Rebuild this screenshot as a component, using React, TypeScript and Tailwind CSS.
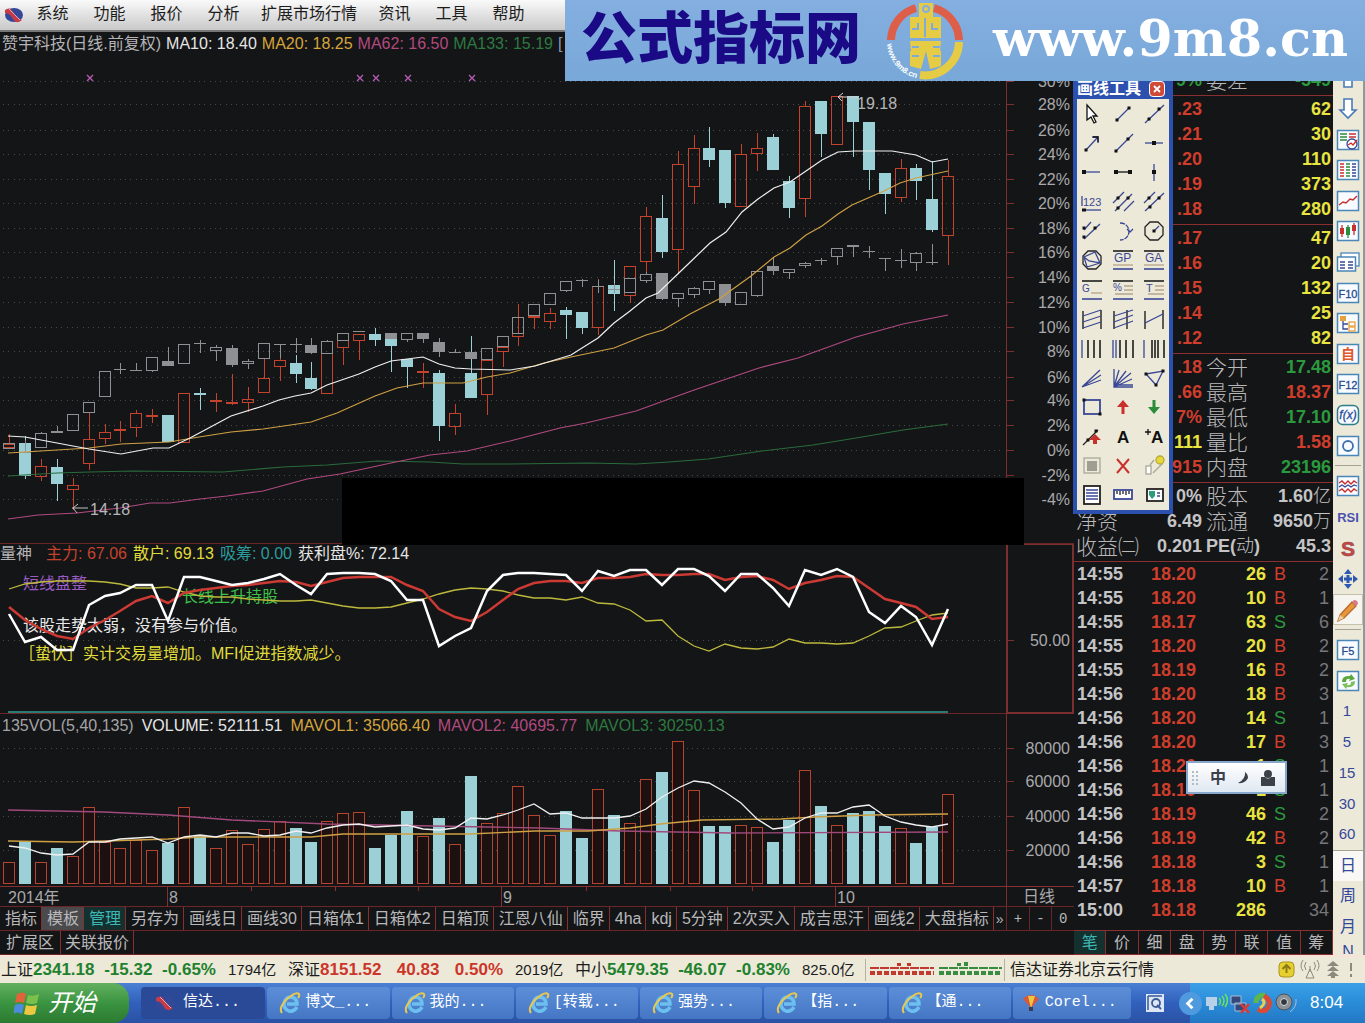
import { type ReactNode } from 'react'
import clsx from 'clsx'

type Kind = 'up' | 'down' | 'flat'
// high, body top, body bottom, low
type Candle = [Kind, number, number, number, number]

const STEP = 15.92
const barX = (i: number) => Math.round(9 + i * STEP)

const PRICE: Candle[] = [
  ['up', 434, 444, 448, 449], ['down', 436, 443, 476, 479], ['up', 459, 466, 477, 481], ['down', 459, 467, 484, 501],
  ['up', 478, 485, 490, 510], ['up', 413, 439, 464, 470], ['up', 424, 432, 439, 444], ['up', 421, 429, 430, 442],
  ['up', 410, 413, 428, 437], ['up', 409, 415, 416, 423], ['down', 415, 415, 442, 442], ['up', 393, 393, 443, 443],
  ['down', 388, 393, 394, 410], ['up', 393, 400, 401, 412], ['up', 374, 402, 403, 405], ['up', 387, 399, 403, 412],
  ['up', 359, 378, 393, 393], ['up', 350, 360, 367, 381], ['down', 355, 363, 374, 383], ['down', 362, 378, 389, 390],
  ['up', 353, 353, 394, 394], ['up', 340, 340, 348, 365], ['up', 334, 334, 341, 360], ['down', 328, 334, 340, 346],
  ['down', 339, 339, 346, 372], ['down', 359, 359, 367, 388], ['up', 363, 371, 372, 388], ['down', 370, 373, 426, 441],
  ['up', 404, 413, 427, 435], ['down', 336, 373, 398, 398], ['up', 360, 360, 395, 415], ['up', 347, 347, 352, 367],
  ['up', 304, 333, 337, 346], ['up', 316, 316, 318, 329], ['up', 308, 313, 322, 329], ['down', 307, 310, 315, 339],
  ['down', 312, 312, 328, 334], ['up', 279, 286, 328, 335], ['down', 260, 285, 294, 311], ['up', 266, 266, 296, 303],
  ['up', 207, 216, 262, 272], ['down', 195, 218, 252, 258], ['up', 151, 164, 250, 273], ['up', 135, 148, 187, 204],
  ['down', 127, 148, 160, 167], ['down', 150, 150, 203, 208], ['up', 144, 154, 207, 207], ['up', 133, 148, 154, 171],
  ['down', 134, 137, 170, 170], ['down', 176, 181, 208, 218], ['up', 101, 106, 199, 217], ['down', 101, 101, 134, 157],
  ['up', 96, 96, 145, 145], ['down', 96, 96, 122, 157], ['down', 122, 122, 170, 190], ['down', 173, 173, 194, 214],
  ['up', 159, 168, 198, 202], ['down', 164, 168, 181, 200], ['down', 161, 199, 230, 232], ['up', 160, 176, 236, 265],
]

const INDEX: (Candle | null)[] = [
  ['up', 443, 443, 449, 449], ['flat', 440, 452, 453, 453], ['up', 432, 433, 448, 448], ['up', 426, 431, 433, 433],
  ['up', 414, 414, 431, 431], ['up', 402, 402, 413, 413], ['up', 371, 371, 397, 397], ['flat', 363, 369, 370, 374],
  ['flat', 363, 370, 371, 371], ['up', 357, 357, 371, 372], ['down', 347, 361, 366, 366], ['up', 344, 344, 364, 364],
  ['flat', 340, 343, 344, 353], ['up', 345, 347, 351, 361], ['down', 345, 348, 365, 367], ['up', 359, 361, 364, 369],
  ['up', 343, 343, 359, 359], ['flat', 344, 344, 345, 358], ['flat', 338, 344, 345, 353], ['down', 338, 345, 353, 354],
  ['up', 340, 341, 354, 354], ['up', 333, 333, 341, 341], ['flat', 331, 331, 332, 332], null,
  ['down', 333, 333, 339, 339], ['up', 333, 333, 340, 342], ['down', 333, 333, 339, 343], ['down', 338, 342, 352, 357],
  ['flat', 349, 352, 353, 353], ['down', 352, 352, 359, 359], ['up', 348, 348, 360, 360], ['up', 336, 336, 347, 347],
  ['up', 317, 317, 334, 334], ['up', 304, 304, 316, 316], ['up', 293, 293, 305, 305], ['up', 281, 281, 291, 292],
  ['flat', 279, 280, 281, 287], ['flat', 280, 286, 287, 293], ['flat', 283, 289, 290, 293], ['up', 278, 278, 293, 293],
  ['up', 272, 274, 281, 283], ['down', 273, 273, 299, 300], ['up', 293, 293, 299, 307], ['up', 287, 288, 295, 298],
  ['up', 281, 281, 290, 294], ['down', 284, 284, 303, 306], ['up', 292, 292, 305, 305], ['up', 270, 271, 296, 297],
  ['down', 257, 266, 271, 275], ['up', 269, 269, 273, 279], ['up', 262, 263, 266, 268], ['flat', 258, 260, 261, 265],
  ['up', 248, 248, 257, 265], ['up', 245, 245, 247, 257], ['flat', 246, 251, 252, 258], ['flat', 258, 258, 259, 271],
  ['flat', 249, 260, 261, 268], ['up', 252, 253, 263, 271], ['flat', 244, 262, 263, 265], null,
]

const MA_LINES = [
  { stroke: '#2a6b3c', points: '8,476 57,473 90,472 133,471 223,472 283,467 327,465 377,461 430,462 463,464 510,464 589,463 636,464 669,462 708,459 762,451 813,445 856,438 903,430 948,424' },
  { stroke: '#b04a80', points: '8,519 38,515 77,513 120,508 150,503 170,503 200,499 227,496 263,491 307,479 340,474 391,463 430,455 467,451 510,441 560,428 586,423 636,411 669,399 697,389 759,368 798,358 856,337 903,324 948,315' },
  { stroke: '#cfa044', points: '8,453 57,450 89,448 121,444 169,442 199,437 231,432 263,429 311,422 337,413 375,396 397,388 423,383 463,383 487,377 510,373 544,363 571,357 614,348 646,335 663,330 690,314 719,299 751,276 774,257 790,248 806,235 822,226 838,214 852,205 884,191 900,183 916,178 948,171' },
  { stroke: '#f0f0f0', points: '8,436 25,437 57,443 89,449 121,454 153,448 169,448 190,438 231,416 263,406 279,400 295,396 311,393 327,385 359,374 375,367 391,361 407,359 423,357 439,364 455,368 471,369 510,370 535,366 571,355 582,348 598,338 614,323 630,311 646,298 658,293 683,269 710,243 726,232 742,212 758,199 774,188 790,182 806,171 822,160 838,152 854,151 892,151 916,155 932,162 948,159' },
]

const MAIN_FORCE = [607, 620, 629, 636, 639, 628, 620, 611, 601, 596, 603, 593, 590, 588, 586, 585, 583, 581, 582, 586, 582, 578, 577, 577, 577, 585, 591, 609, 617, 621, 612, 600, 589, 583, 581, 581, 583, 578, 578, 577, 574, 575, 575, 574, 574, 580, 577, 576, 580, 589, 583, 580, 576, 577, 588, 599, 603, 607, 619, 617]
const RETAIL = [589, 584, 582, 581, 581, 581, 582, 584, 588, 588, 587, 592, 596, 597, 597, 599, 600, 601, 601, 600, 603, 606, 608, 608, 607, 603, 599, 594, 590, 588, 589, 591, 595, 598, 598, 600, 597, 603, 604, 610, 621, 620, 636, 646, 651, 644, 648, 649, 647, 639, 643, 643, 644, 643, 636, 628, 627, 621, 615, 613]
const PROFIT = [614, 642, 637, 650, 650, 605, 596, 593, 585, 585, 621, 577, 577, 581, 585, 583, 579, 574, 585, 594, 574, 573, 573, 574, 581, 600, 600, 646, 636, 628, 591, 575, 573, 573, 574, 575, 591, 571, 576, 570, 570, 585, 569, 569, 576, 591, 574, 574, 588, 606, 570, 575, 569, 577, 612, 623, 606, 617, 645, 609]

const VOLUME_TOPS = [862, 841, 862, 848, 856, 807, 842, 848, 840, 850, 843, 807, 835, 848, 830, 844, 829, 821, 828, 842, 821, 813, 812, 848, 835, 811, 836, 818, 844, 776, 823, 813, 786, 815, 835, 811, 838, 789, 815, 823, 779, 772, 741, 790, 826, 826, 825, 827, 842, 820, 770, 806, 825, 813, 811, 826, 828, 843, 827, 794]
const VOLUME_DOWN = new Set([1, 3, 10, 12, 18, 19, 23, 24, 25, 27, 29, 35, 36, 38, 41, 44, 45, 48, 49, 51, 53, 54, 55, 57, 58])
const VOLUME_MA = [846, 848, 853, 855, 854, 842, 842, 839, 838, 837, 843, 837, 835, 837, 833, 833, 836, 835, 831, 833, 828, 825, 824, 827, 826, 825, 829, 830, 828, 818, 819, 815, 810, 804, 814, 813, 818, 818, 818, 816, 809, 797, 788, 781, 783, 792, 803, 819, 829, 827, 818, 813, 813, 807, 805, 816, 822, 825, 827, 824]

const PERCENTS = [
  [81, '30%'], [104, '28%'], [130, '26%'], [154, '24%'], [179, '22%'], [203, '20%'], [228, '18%'], [252, '16%'], [277, '14%'],
  [302, '12%'], [327, '10%'], [351, '8%'], [377, '6%'], [400, '4%'], [425, '2%'], [450, '0%'], [475, '-2%'], [499, '-4%'],
] as const

const VOLUME_AXIS = [[748, '80000'], [781, '60000'], [816, '40000'], [850, '20000']] as const

const series = (ys: number[]) => ys.map((y, i) => `${barX(i)},${y}`).join(' ')

function CandleMark({ x, candle, muted }: { x: number; candle: Candle; muted?: boolean }) {
  const [kind, high, top, bottom, low] = candle
  const color = muted ? '#8f9094' : kind === 'down' ? '#9bd0d6' : '#c4432d'
  const thin = bottom - top <= 1
  const filled = kind === 'down' || thin
  return (
    <g stroke={color} fill={filled ? color : '#141517'} strokeWidth={1}>
      {high < top && <line x1={x + 0.5} x2={x + 0.5} y1={high} y2={top} />}
      {low > bottom && <line x1={x + 0.5} x2={x + 0.5} y1={bottom} y2={low} />}
      {thin ? (
        <rect x={x - 6} y={top} width={12} height={kind === 'flat' ? 1 : 2} stroke="none" />
      ) : (
        <rect x={x - 5.5} y={top + 0.5} width={11} height={Math.max(bottom - top - 1, 1)} fillOpacity={filled ? 1 : 0} />
      )}
    </g>
  )
}

function GridLine({ y, label }: { y: number; label: string }) {
  return (
    <g>
      <line x1={3} x2={1005} y1={y + 0.5} y2={y + 0.5} stroke="#4a4a4c" strokeDasharray="1 4.3" />
      <line x1={1006} x2={1014} y1={y + 0.5} y2={y + 0.5} stroke="#7d2f2f" />
      <text x={1070} y={y + 6} textAnchor="end" fontSize={16} fill="#a9a9ab">{label}</text>
    </g>
  )
}

function Readout({ items, className }: { items: [string, string][]; className: string }) {
  return (
    <div className={clsx('absolute top-0 left-0 flex pl-0.5 text-base leading-6 whitespace-nowrap', className)}>
      {items.map(([text, color]) => (
        <span key={text} className={color}>{text}</span>
      ))}
    </div>
  )
}

function PricePanel() {
  return (
    <section className="relative">
      <svg viewBox="0 32 1074 512" className="block h-auto w-full" shapeRendering="crispEdges">
        {PERCENTS.map(([y, label]) => <GridLine key={label} y={y} label={label} />)}
        <line x1={1006.5} x2={1006.5} y1={32} y2={543} stroke="#7d2f2f" />
        <line x1={0} x2={1074} y1={543.5} y2={543.5} stroke="#6b2528" />
        {PRICE.map((c, i) => <CandleMark key={i} x={barX(i)} candle={c} />)}
        {INDEX.map((c, i) => c && <CandleMark key={i} x={barX(i)} candle={c} muted />)}
        <g fill="none" shapeRendering="auto">
          {MA_LINES.map((l) => <polyline key={l.stroke} points={l.points} stroke={l.stroke} strokeWidth={1.2} />)}
          {[90, 360, 376, 408, 472].map((x) => (
            <path key={x} d={`M${x - 3} 75l6 6m0-6l-6 6`} stroke="#b45ab0" strokeWidth={1.4} />
          ))}
          <path d="M88 508H72m6-4l-5 4l4 5" stroke="#c4c4c4" />
          <path d="M858 97H838m5-4l-5 4l4 4" stroke="#d8d0d0" />
        </g>
        <text x={90} y={515} fontSize={16} fill="#b6b6b8">14.18</text>
        <text x={857} y={109} fontSize={16} fill="#b6b6b8">19.18</text>
      </svg>
      <Readout
        className="gap-[5px]"
        items={[
          ['赞宇科技(日线.前复权)', 'text-[#b4b4b6]'],
          ['MA10: 18.40', 'text-[#e6e6e6]'],
          ['MA20: 18.25', 'text-[#d6a53c]'],
          ['MA62: 16.50', 'text-[#b04a80]'],
          ['MA133: 15.19', 'text-[#2d7a40]'],
          ['[', 'text-[#8a9ab8]'],
        ]}
      />
    </section>
  )
}

function StrengthPanel() {
  return (
    <section className="relative">
      <svg viewBox="0 544 1074 170" className="block h-auto w-full" shapeRendering="crispEdges">
        <GridLine y={640} label="50.00" />
        <g fontSize={16} shapeRendering="auto">
          <text x={23} y={589} fill="#9a5cc4">短线盘整</text>
          <text x={182} y={602} fill="#3cc04a">长线上升持股</text>
          <text x={23} y={631} fill="#e8e8e8">该股走势太弱，没有参与价值。</text>
          <text x={19} y={659} fill="#e0dc3a">［蛰伏］实计交易量增加。MFI促进指数减少。</text>
        </g>
        <g fill="none" shapeRendering="auto">
          <polyline points={series(RETAIL)} stroke="#bdb93c" strokeWidth={1.3} />
          <polyline points={series(MAIN_FORCE)} stroke="#cc3a34" strokeWidth={2.5} />
          <polyline points={series(PROFIT)} stroke="#ffffff" strokeWidth={2.5} />
        </g>
        <line x1={8} x2={948} y1={712} y2={712} stroke="#2b7c74" strokeWidth={2} />
        <line x1={0} x2={1006} y1={713.5} y2={713.5} stroke="#6b2528" />
        <path d="M1007 544V713H1073V544z" fill="none" stroke="#7d2f2f" strokeWidth={2} />
      </svg>
      <div className="absolute top-0 left-0 flex gap-1.5 text-base leading-5 whitespace-nowrap">
        <span className="mr-2 text-[#b4b4b6]">量神</span>
        <span className="text-[#c4432d]">主力: 67.06</span>
        <span className="text-[#e0dc3a]">散户: 69.13</span>
        <span className="text-[#2b9c9c]">吸筹: 0.00</span>
        <span className="text-[#e6e6e6]">获利盘%: 72.14</span>
      </div>
    </section>
  )
}

function VolumePanel() {
  return (
    <section className="relative">
      <svg viewBox="0 714 1074 193" className="block h-auto w-full" shapeRendering="crispEdges">
        {VOLUME_AXIS.map(([y, label]) => <GridLine key={label} y={y} label={label} />)}
        <line x1={1006.5} x2={1006.5} y1={714} y2={907} stroke="#7d2f2f" />
        {VOLUME_TOPS.map((top, i) =>
          VOLUME_DOWN.has(i) ? (
            <rect key={i} x={barX(i) - 6} y={top} width={12} height={884 - top} fill="#9bd0d6" />
          ) : (
            <rect key={i} x={barX(i) - 5.5} y={top + 0.5} width={11} height={883 - top} fill="#1c1010" stroke="#b5442f" />
          ),
        )}
        <g fill="none" shapeRendering="auto" strokeWidth={1.3}>
          <polyline points="8,810 104,812 168,815 232,820 327,824 487,827 540,828 620,831 732,833 948,832" stroke="#a04a7c" />
          <polyline points="8,841 73,842 168,839 200,837 311,837 343,834 470,834 535,831 588,831 630,828 660,824 702,820 781,819 815,817 870,815 948,814" stroke="#cfa044" />
          <polyline points={series(VOLUME_MA)} stroke="#f0f0f0" />
        </g>
        <line x1={0} x2={1074} y1={886.5} y2={886.5} stroke="#8a2f30" />
        <line x1={0} x2={1074} y1={906.5} y2={906.5} stroke="#6b2528" />
        {[168, 502, 836].map((x) => <line key={x} x1={x - 0.5} x2={x - 0.5} y1={887} y2={907} stroke="#8a2f30" />)}
        {[251, 335, 418, 586, 670, 752].map((x) => <line key={x} x1={x + 0.5} x2={x + 0.5} y1={887} y2={891} stroke="#8a2f30" />)}
        <g fontSize={16} fill="#a9a9ab">
          <text x={8} y={903}>2014年</text>
          <text x={169} y={903}>8</text>
          <text x={503} y={903}>9</text>
          <text x={837} y={903}>10</text>
          <text x={1023} y={902}>日线</text>
        </g>
      </svg>
      <Readout
        className="gap-2"
        items={[
          ['135VOL(5,40,135)', 'text-[#a4a4a6]'],
          ['VOLUME: 52111.51', 'text-[#e6e6e6]'],
          ['MAVOL1: 35066.40', 'text-[#d6a53c]'],
          ['MAVOL2: 40695.77', 'text-[#b04a80]'],
          ['MAVOL3: 30250.13', 'text-[#2d7a40]'],
        ]}
      />
    </section>
  )
}

const TEMPLATE_TABS = ['指标', '模板', '管理', '另存为', '画线日', '画线30', '日箱体1', '日箱体2', '日箱顶', '江恩八仙', '临界', '4ha', 'kdj', '5分钟', '2次买入', '成吉思汗', '画线2', '大盘指标']

function TemplateTabs() {
  return (
    <div className="text-base whitespace-nowrap text-[#b8b8ba]">
      <div className="flex h-6 border-b border-[#6b2528]">
        <div className="flex min-w-0 flex-1 overflow-hidden">
          {TEMPLATE_TABS.map((tab, i) => (
            <button
              key={tab}
              className={clsx(
                'shrink-0 border-r border-[#8a2f30] pr-1 pl-[5px] leading-6',
                i === 1 && 'bg-[#4a4a4c]',
                i === 2 && 'bg-[#14302f] text-[#3cb8b4]',
              )}
            >
              {tab}
            </button>
          ))}
          <button aria-label="更多" className="pl-0.5 text-sm">»</button>
        </div>
        <div className="flex w-[68px] shrink-0 font-['Liberation_Mono',monospace] text-sm">
          {['+', '-', '0'].map((s) => (
            <button key={s} className="flex-1 border-l border-[#6b2528]">{s}</button>
          ))}
        </div>
      </div>
      <div className="flex h-6 border-b border-[#6b2528]">
        <button className="border-r border-[#8a2f30] px-1.5 leading-5">扩展区</button>
        <button className="border-r border-[#8a2f30] px-1 leading-5">关联报价</button>
      </div>
    </div>
  )
}

const ASKS = [['.23', '62'], ['.21', '30'], ['.20', '110'], ['.19', '373'], ['.18', '280']]
const BIDS = [['.17', '47'], ['.16', '20'], ['.15', '132'], ['.14', '25'], ['.12', '82']]
const RED = 'text-[#cf3d2c]'
const GREEN = 'text-[#2b9a3e]'
const YELLOW = 'text-[#e8e440]'
const GRAY = 'text-[#c4c4c6]'
const STATS = [
  ['.18', RED, '今开', '17.48', GREEN],
  ['.66', RED, '最高', '18.37', RED],
  ['7%', RED, '最低', '17.10', GREEN],
  ['111', YELLOW, '量比', '1.58', RED],
  ['915', RED, '内盘', '23196', GREEN],
]
const TICKS = [
  ['14:55', '18.20', '26', 'B', '2'], ['14:55', '18.20', '10', 'B', '1'], ['14:55', '18.17', '63', 'S', '6'],
  ['14:55', '18.20', '20', 'B', '2'], ['14:55', '18.19', '16', 'B', '2'], ['14:56', '18.20', '18', 'B', '3'],
  ['14:56', '18.20', '14', 'S', '1'], ['14:56', '18.20', '17', 'B', '3'], ['14:56', '18.20', '1', 'S', '1'],
  ['14:56', '18.19', '1', 'S', '1'], ['14:56', '18.19', '46', 'S', '2'], ['14:56', '18.19', '42', 'B', '2'],
  ['14:56', '18.18', '3', 'S', '1'], ['14:57', '18.18', '10', 'B', '1'], ['15:00', '18.18', '286', '', '34'],
]

function QuoteRow({ name = '', value, valueColor, label = '', right, rightColor }: {
  name?: string
  value: string
  valueColor: string
  label?: string
  right: ReactNode
  rightColor: string
}) {
  return (
    <tr className="h-[25px]">
      <td className="w-[60px] p-0 pl-0.5 text-[21px] font-light">{name}</td>
      <td className={clsx('w-[68px] p-0 text-right font-bold', valueColor)}>{value}</td>
      <td className="w-[52px] p-0 pl-1 text-[21px] font-light">{label}</td>
      <td className={clsx('p-0 pr-0.5 text-right font-bold', rightColor)}>{right}</td>
    </tr>
  )
}

function QuoteTable({ children }: { children: ReactNode }) {
  return (
    <div className="border-b border-[#8a2f30] pt-px pb-0.5">
      <table className="w-full table-fixed border-collapse text-lg leading-[25px] whitespace-nowrap text-[#b8b8ba]">
        <tbody>{children}</tbody>
      </table>
    </div>
  )
}

function QuotePanel() {
  return (
    <aside className="flex w-[259px] shrink-0 flex-col bg-[#141517]">
      <div className="pt-[35px]">
        <QuoteTable>
          <QuoteRow value="9%" valueColor={GREEN} label="委差" right="-549" rightColor={GREEN} />
        </QuoteTable>
      </div>
      <QuoteTable>
        {ASKS.map(([p, v]) => <QuoteRow key={p} value={p} valueColor={RED} right={v} rightColor={YELLOW} />)}
      </QuoteTable>
      <QuoteTable>
        {BIDS.map(([p, v]) => <QuoteRow key={p} value={p} valueColor={RED} right={v} rightColor={YELLOW} />)}
      </QuoteTable>
      <QuoteTable>
        {STATS.map(([v, vc, label, r, rc]) => (
          <QuoteRow key={label} value={v} valueColor={vc} label={label} right={r} rightColor={rc} />
        ))}
      </QuoteTable>
      <QuoteTable>
        <QuoteRow value="0%" valueColor={GRAY} label="股本" right={<>1.60<span className="font-light">亿</span></>} rightColor={GRAY} />
        <QuoteRow name="净资" value="6.49" valueColor={GRAY} label="流通" right={<>9650<span className="font-light">万</span></>} rightColor={GRAY} />
        <tr className="h-[25px]">
          <td className="p-0 pl-0.5 text-[21px] font-light">收益㈡</td>
          <td className={clsx('p-0 text-right font-bold', GRAY)}>0.201</td>
          <td colSpan={2} className={clsx('p-0 pr-0.5 pl-1 font-bold', GRAY)}>
            <span className="flex justify-between"><span>PE(<span className="font-light">动</span>)</span><span>45.3</span></span>
          </td>
        </tr>
      </QuoteTable>
      <table className="w-full table-fixed border-collapse text-lg leading-6">
        <tbody>
          {TICKS.map(([time, price, lots, side, count], i) => (
            <tr key={i} className="h-6">
              <td className={clsx('w-[54px] p-0 pl-[3px] font-bold', GRAY)}>{time}</td>
              <td className={clsx('w-[68px] p-0 text-right font-bold', RED)}>{price}</td>
              <td className={clsx('w-[70px] p-0 text-right font-bold', YELLOW)}>{lots}</td>
              <td className={clsx('w-[28px] p-0 pl-2', side === 'S' ? GREEN : RED)}>{side}</td>
              <td className="p-0 pr-1 text-right text-[#77777a]">{count}</td>
            </tr>
          ))}
        </tbody>
      </table>
      <div className="mt-auto flex h-[25px] border-y border-[#8a2f30] text-base text-[#b8b8ba]">
        {[...'笔价细盘势联值筹'].map((t, i) => (
          <button key={t} className={clsx('flex-1 border-r border-[#8a2f30] leading-[23px]', i === 0 && 'bg-[#14302f] text-[#3cb8b4]')}>
            {t}
          </button>
        ))}
      </div>
    </aside>
  )
}

function Glyph({ children, size = 24 }: { children: ReactNode; size?: number }) {
  return (
    <svg width={size} height={size} viewBox="0 0 24 24" fill="none" stroke="#3a4796" strokeWidth={1.3} aria-hidden="true">
      {children}
    </svg>
  )
}

const dots = (...pts: number[][]) => pts.map(([x, y]) => <rect key={`${x}-${y}`} x={x - 1.5} y={y - 1.5} width={3} height={3} fill="#111" stroke="none" />)
const letters = (text: string, x: number, y: number, size = 9) => (
  <text x={x} y={y} fontSize={size} fill="#3a4796" stroke="none">{text}</text>
)
const rules = (
  <>
    <path d="M2 3H22" stroke="#111" strokeWidth={1.5} />
    <path d="M2 21H22" strokeWidth={1.6} />
  </>
)

const DRAW_TOOLS: [string, ReactNode][] = [
  ['选择', <path d="M7 3V18l4-3l3 6l2-1l-3-6h4z" fill="#fff" stroke="#111" />],
  ['线段', <><path d="M6 18L18 6" />{dots([6, 18], [18, 6])}</>],
  ['直线', <><path d="M3 21L22 3" />{dots([7, 17], [17, 7])}</>],
  ['箭头', <><path d="M6 19L18 6M12 6h6v6" />{dots([6, 19])}<path d="M13 6h5v5" stroke="#111" /></>],
  ['射线', <><path d="M4 21L22 3" />{dots([5, 20], [17, 8])}</>],
  ['水平线', <><path d="M3 12H21" />{dots([12, 12])}<path d="M10 12h4" stroke="#111" strokeWidth={4} /></>],
  ['水平射线', <><path d="M4 12H20" /><path d="M2 12h4" stroke="#111" strokeWidth={4} /></>],
  ['水平线段', <><path d="M4 12H20" stroke="#111" /><path d="M3 12h4M17 12h4" stroke="#111" strokeWidth={4} /></>],
  ['垂直线', <><path d="M12 4V21" /><path d="M10 12h4" stroke="#111" strokeWidth={4} /></>],
  ['价位线', <>{letters('123', 3, 16, 11)}<path d="M2 6V16" /><path d="M2 20H21" /><path d="M2 20h4" stroke="#111" strokeWidth={3} /></>],
  ['平行线', <><path d="M2 13L13 2M4 21L21 4M13 21L23 11" />{dots([7, 8], [17, 8], [7, 18])}</>],
  ['通道', <><path d="M2 13L13 2M3 21L22 3" />{dots([7, 8], [17, 8], [8, 17])}</>],
  ['平行射线', <><path d="M4 11L11 3M4 20L20 5" />{dots([4, 9], [4, 18], [15, 9])}</>],
  ['圆弧', <><path d="M9 4C21 4 21 21 9 21" strokeDasharray="5 1" /><path d="M16 10l3 3l3-3" /></>],
  ['圆', <><path d="M8 3h8l5 5v8l-5 5H8l-5-5V8z" stroke="#222" /><path d="M12 12l5-5" />{dots([12, 12])}</>],
  ['外接圆', <><path d="M8 3h8l5 5v8l-5 5H8l-5-5V8z" stroke="#222" /><path d="M4 9L15 4L20 15L9 13L4 9L7 19L20 15" /></>],
  ['黄金价位', <>{rules}{letters('GP', 3, 14, 12)}<path d="M2 17H22" stroke="#b5a58a" /></>],
  ['黄金目标', <>{rules}{letters('GA', 3, 14, 12)}<path d="M2 17H22" stroke="#b5a58a" /></>],
  ['黄金分割', <>{rules}{letters('G', 2, 14, 10)}<path d="M11 15H22" stroke="#b5a58a" /></>],
  ['百分比', <>{rules}{letters('%', 2, 13, 10)}<path d="M13 8H22M13 12H22M4 16H22" stroke="#b5a58a" /></>],
  ['波段线', <>{rules}{letters('T', 4, 14, 11)}<path d="M13 8H22M13 12H22M6 16H22" stroke="#b5a58a" /></>],
  ['线性回归', <><path d="M3 4V22M21 3V22" stroke="#111" /><path d="M3 9L21 3M3 15L21 9M3 21L21 15" /></>],
  ['延长线性回归', <><path d="M3 4V22M16 3V22" stroke="#111" /><path d="M3 9L22 3M3 15L22 8M3 21L22 14" /></>],
  ['回归线', <><path d="M3 4V22M21 3V22" stroke="#111" /><path d="M3 16L21 7" /></>],
  ['周期线', <><path d="M2 3V21" /><path d="M8 3V21M14 3V21M20 3V21" stroke="#111" strokeWidth={1.5} /></>],
  ['费波拉契', <><path d="M2 3V21M5 3V21" /><path d="M9 3V21M15 3V21M22 3V21" stroke="#111" strokeWidth={1.5} /></>],
  ['甘氏周期', <><path d="M2 3V21" /><path d="M10 3V21M13 3V21M16 3V21M22 3V21" stroke="#111" strokeWidth={1.5} /></>],
  ['阻速线', <path d="M2 21L20 4M2 21L21 9M2 21L21 14" />],
  ['甘氏线', <path d="M3 3V21H22M3 21L8 4M3 21L15 5M3 21L20 7M3 21L21 13M5 19H22" />],
  ['三角形', <><path d="M4 8L21 5L14 19z" />{dots([4, 8], [21, 5], [14, 19])}</>],
  ['矩形', <><rect x="4" y="5" width="16" height="14" strokeWidth={1.8} />{dots([4, 5], [20, 19])}</>],
  ['买入标记', <><path d="M12 19V8" stroke="#c9302c" strokeWidth={3} /><path d="M6 12h12l-6-7z" fill="#c9302c" stroke="none" /></>],
  ['卖出标记', <><path d="M12 5V16" stroke="#2b8c3a" strokeWidth={3} /><path d="M6 12h12l-6 7z" fill="#2b8c3a" stroke="none" /></>],
  ['趋势标记', <><path d="M3 20L18 5" stroke="#222" />{dots([8, 15], [16, 6])}<path d="M9 15l6-6l6 6h-4v4h-4v-4z" fill="#c9302c" stroke="none" /></>],
  ['文字', <text x="6" y="18" fontSize="17" fontWeight="bold" fill="#111" stroke="none">A</text>],
  ['文字注释', <><text x="9" y="18" fontSize="17" fontWeight="bold" fill="#111" stroke="none">A</text><path d="M3 7h6M6 4v6" stroke="#111" /></>],
  ['隐藏', <><rect x="4" y="4" width="16" height="15" stroke="#aaa89a" /><rect x="7" y="7" width="10" height="10" fill="#a09e92" stroke="none" /></>],
  ['删除', <path d="M6 5L18 19M18 5L6 19" stroke="#c9302c" strokeWidth={2} />],
  ['提示', <><rect x="4" y="12" width="5" height="8" stroke="#a8a697" fill="#fff" /><path d="M11 19L21 9M12 6L8 11" stroke="#a8a697" /><circle cx="18" cy="6" r="4" fill="#e6d838" stroke="#b5a93c" /></>],
  ['列表', <><rect x="4" y="3" width="16" height="18" fill="#fff" stroke="#222" strokeWidth={1.8} /><path d="M6 7H18M6 10H18M6 13H18M6 16H18" /></>],
  ['标尺', <><rect x="3" y="7" width="18" height="9" fill="#fff" stroke="#3a4796" strokeWidth={1.8} /><path d="M6 8v3M9 8v4M12 8v3M15 8v4M18 8v3" stroke="#222" /></>],
  ['图片', <><rect x="5" y="6" width="16" height="12" fill="#fff" stroke="#222" strokeWidth={1.8} /><path d="M7 8h6v5l-3 3l-3-4z" fill="#2b9c7c" stroke="none" /><path d="M15 10h3M15 13h3" /></>],
]

function DrawWindow() {
  return (
    <div className="absolute top-[46px] right-[192px] w-[100px] rounded-t bg-[#2c50ae] p-1 pt-0">
      <div className="flex h-[21px] items-center justify-between pr-1 text-base font-bold text-white">
        <span className="whitespace-nowrap">画线工具</span>
        <button aria-label="关闭" className="flex size-4 items-center justify-center rounded-sm border border-white bg-[#d04a38]">
          <svg width={8} height={8} viewBox="0 0 8 8" aria-hidden="true"><path d="M1 1l6 6m0-6l-6 6" stroke="#fff" strokeWidth={1.8} /></svg>
        </button>
      </div>
      <div className="grid h-[411px] grid-cols-3 grid-rows-14 bg-[#ece9d8]">
        {DRAW_TOOLS.map(([name, icon]) => (
          <button key={name} title={name} aria-label={name} className="flex min-h-0 items-center justify-center">
            <Glyph>{icon}</Glyph>
          </button>
        ))}
      </div>
    </div>
  )
}

const frame = <rect x="1.5" y="2.5" width="21" height="19" fill="#f8fbff" stroke="#4a86b8" strokeWidth={1.5} />
const frameText = (t: string) => <>{frame}<text x="12" y="17" textAnchor="middle" fontSize="11" fill="#2a4a90" stroke="#2a4a90" strokeWidth={0.3}>{t}</text></>

const SIDE_TOP: [string, ReactNode][] = [
  ['上翻', <path d="M8 21V12H3L12 3L21 12H16V21z" fill="#fff" stroke="#4a7ab8" strokeWidth={1.6} />],
  ['下翻', <path d="M8 2V13H4L12 21L20 13H16V2z" fill="#fff" stroke="#4a7ab8" strokeWidth={1.6} />],
  ['分时', <>{frame}<path d="M4 6h7M4 9h7M4 12h7" stroke="#2b8c3a" strokeWidth={1.6} /><path d="M13 6h7M13 9h7" stroke="#c9302c" strokeWidth={1.6} /><circle cx="16" cy="16" r="5" fill="#fff" /><path d="M12 17l3-2l2 2l4-5" stroke="#c9302c" /></>],
  ['报价', <>{frame}<path d="M4 6h4M4 9h4M4 12h4M4 15h4M4 18h4" stroke="#c9302c" strokeWidth={1.6} /><path d="M10 6h4M10 9h4M10 12h4M10 15h4M10 18h4" stroke="#2b8c3a" strokeWidth={1.6} /><path d="M16 6h4M16 9h4M16 12h4M16 15h4M16 18h4" strokeWidth={1.6} /></>],
  ['走势', <>{frame}<path d="M3 16l4-3l3 1l4-4l3 1l4-4" stroke="#c9302c" strokeWidth={1.5} /></>],
  ['K线', <>{frame}<path d="M6 6v12M18 4v12" stroke="#c9302c" /><path d="M12 6v13" stroke="#2b8c3a" /><path d="M6 9v6M18 6v6" stroke="#c9302c" strokeWidth={4} /><path d="M12 8v8" stroke="#2b8c3a" strokeWidth={4} /></>],
  ['资讯', <><rect x="5" y="3" width="18" height="13" fill="#fff" stroke="#4a86b8" /><rect x="1.5" y="7" width="18" height="14" fill="#fff" stroke="#4a86b8" strokeWidth={1.5} /><path d="M4 12h5M12 12h5M4 15h5M12 15h5M4 18h5M12 18h5" /></>],
  ['F10', frameText('F10')],
  ['树形', <>{frame}<rect x="4" y="5" width="6" height="5" fill="#e8a03c" stroke="none" /><path d="M7 10v8h5M7 13h5" /><rect x="13" y="11" width="6" height="4" stroke="#e8a03c" /><rect x="13" y="16" width="6" height="4" stroke="#e8a03c" /></>],
  ['自选', <>{frame}<text x="12" y="17" textAnchor="middle" fontSize="14" fontWeight="bold" fill="#e05a28" stroke="none">自</text></>],
  ['F12', frameText('F12')],
  ['公式', <><rect x="1.5" y="2.5" width="21" height="19" rx="5" fill="#f8fbff" stroke="#2f7c8c" strokeWidth={1.5} /><text x="12" y="16" textAnchor="middle" fontSize="12" fontStyle="italic" fill="#2a4c98" stroke="#2a4c98" strokeWidth={0.3}>f(x)</text></>],
  ['设置', <>{frame}<circle cx="12" cy="12" r="5" stroke="#3f72b0" strokeWidth={1.8} /></>],
]
const SIDE_MID: [string, ReactNode][] = [
  ['叠加', <>{frame}<path d="M3 9l3-2l3 3l3-3l3 3l3-3l3 2M3 17l3-2l3 3l3-3l3 3l3-3l3 2" stroke="#c9302c" strokeWidth={1.4} /><path d="M3 13l3-2l3 2l3-2l3 2l3-2l3 1" /></>],
  ['RSI', <text x="12" y="17" textAnchor="middle" fontSize="13" fontWeight="bold" fill="#4a52b0" stroke="none">RSI</text>],
  ['资金', <text x="12" y="20" textAnchor="middle" fontSize="21" fontWeight="bold" fill="#c94444" stroke="#8c4a4a" strokeWidth={0.6}>S</text>],
  ['移动', <><path d="M12 2l4 5H8zM12 22l4-5H8zM2 12l5-4v8zM22 12l-5-4v8z" fill="#2c58b0" stroke="none" /><path d="M8 12h8M12 8v8" strokeWidth={3} stroke="#2c58b0" /></>],
  ['画线', <><path d="M4 17L16 4l4 4L8 20l-6 3z" fill="#e8963c" stroke="#b56a2c" /><path d="M16 4l2-2q4 0 4 4l-2 2z" fill="#d87c8c" stroke="none" /><path d="M2 23l2-6l4 3z" fill="#e8cfa0" stroke="none" /></>],
]
const PERIODS: [string, ReactNode][] = [
  ['F5', frameText('F5')],
  ['刷新', <>{frame}<path d="M6 13q0-7 8-6l1-2l4 5l-6 2l1-2q-4-1-4 3z" fill="#58a83c" stroke="none" /><path d="M19 12q0 7-8 6l-1 2l-4-5l6-1l-1 2q4 1 4-3z" fill="#7cc05c" stroke="none" /></>],
]

function SideToolbar() {
  return (
    <nav className="flex w-8 shrink-0 flex-col border-r-2 border-[#8f9a98] bg-[#ece9d8] pt-[31px] text-base text-[#34489a]">
      <div className="grid h-[398px] grid-rows-13">
        {SIDE_TOP.map(([name, icon]) => (
          <button key={name} aria-label={name} className="flex min-h-0 items-center justify-center"><Glyph>{icon}</Glyph></button>
        ))}
      </div>
      <div className="mx-0.5 my-1 h-0.5 border-t border-[#a5a294]" />
      <div className="grid h-[154px] grid-rows-5">
        {SIDE_MID.map(([name, icon]) => (
          <button key={name} aria-label={name} className={clsx('flex min-h-0 items-center justify-center', name === '画线' && 'border border-[#c5c0aa] bg-[#f6f4ee]')}>
            <Glyph>{icon}</Glyph>
          </button>
        ))}
      </div>
      <div className="mx-0.5 my-1 h-0.5 border-t border-[#a5a294]" />
      <div className="grid h-[307px] grid-rows-10">
        {PERIODS.map(([name, icon]) => (
          <button key={name} aria-label={name} className="flex min-h-0 items-center justify-center"><Glyph>{icon}</Glyph></button>
        ))}
        {['1', '5', '15', '30', '60', '日', '周', '月'].map((p) => (
          <button key={p} className={clsx('min-h-0', p > '9' ? 'pr-0' : 'pr-0.5 text-[15px]', p === '日' && 'border-t border-[#a5a294] bg-[#f9f8f4]')}>{p}</button>
        ))}
      </div>
      <button className="h-3 overflow-hidden leading-5">N</button>
    </nav>
  )
}

function AppLogo({ className }: { className?: string }) {
  return (
    <svg viewBox="0 0 20 16" className={className} aria-hidden="true">
      <ellipse cx="10" cy="8" rx="9" ry="7" fill="#34489a" />
      <path d="M1 3q5-4 8 2t9 8q-6 5-9-1t-8-6z" fill="#c93a44" />
      <path d="M5 2l11 11" stroke="#e8a8b0" />
    </svg>
  )
}

function MenuBar() {
  return (
    <header className="flex h-8 items-center border-b-2 border-[#77777a] bg-linear-to-b from-[#fafafa] to-[#c9c9c9] pl-1 text-base text-[#1c1c1c]">
      <AppLogo className="h-4 w-5" />
      {['系统', '功能', '报价', '分析', '扩展市场行情', '资讯', '工具', '帮助'].map((m) => (
        <button key={m} className={clsx('pb-0.5 text-center whitespace-nowrap', m.length > 2 ? 'w-[114px]' : 'w-[57px]')}>{m}</button>
      ))}
    </header>
  )
}

function Banner() {
  return (
    <div className="absolute top-0 right-0 flex h-[81px] w-[800px] items-center bg-linear-to-b from-[#84afe0] to-[#78a8d8] pl-4">
      <span className="pb-1 text-[56px] leading-none font-black text-[#1a0a86]">公式指标网</span>
      <svg width={80} height={80} viewBox="0 0 80 80" className="ml-6 shrink-0" aria-hidden="true">
        <g fill="none" strokeWidth={8}>
          <path d="M6 39A34 34 0 0 1 31 7M49 7A34 34 0 0 1 74 39" stroke="#dd5f4a" />
          <path d="M74 41A34 34 0 0 1 35 74" stroke="#e6cb45" />
        </g>
        <path d="M34 2h14v14h8v21H25V16h9zM25 40h31l-1 10h1v15l-11 3l-4-18l-5 18l-11-3V50h1z" fill="#e6cb45" />
        <circle cx="41" cy="8" r="3" fill="#e6cb45" stroke="#84afe0" strokeWidth={2} />
        <path d="M33 22v6h-6M40 17v19M47 22v6h6M27 46h7M48 46h7M27 55h7M48 55h7" stroke="#7fabdc" strokeWidth={2} fill="none" />
        <path id="ring" d="M2 43A38 38 0 0 0 38 78" fill="none" />
        <text fontSize="8" fontWeight="bold" fill="#fff"><textPath href="#ring">www.9m8.cn</textPath></text>
      </svg>
      <span className="ml-7 pb-1 font-['DejaVu_Serif',serif] text-[51px] leading-none font-bold text-white">www.9m8.cn</span>
    </div>
  )
}

function ImeBar() {
  return (
    <div className="absolute top-[729px] right-[78px] flex h-[33px] w-[101px] items-center gap-2.5 border-2 border-[#86a6cc] bg-linear-to-b from-white to-[#dfe8f2] pl-1 text-[#3c4048]">
      <svg width={8} height={16} aria-hidden="true"><path d="M1 1V16M5 1V16" stroke="#b4bac2" strokeWidth={2} strokeDasharray="2 2" /></svg>
      <button className="text-base leading-none font-bold">中</button>
      <svg width={14} height={16} viewBox="0 0 14 16" aria-hidden="true"><path d="M9 2Q10 9 2 13Q9 14 12 8Q12 4 9 2z" fill="#3c4048" /></svg>
      <svg width={16} height={18} viewBox="0 0 16 18" aria-hidden="true"><circle cx="8" cy="5" r="4" fill="#3c4048" /><path d="M1 8h4q3 3 6 0h4v9H1z" fill="#3c4048" /></svg>
    </div>
  )
}

const MARKETS = [
  ['上证', '2341.18', '-15.32', '-0.65%', '1794亿', 'text-[#21812e]'],
  ['深证', '8151.52', '40.83', '0.50%', '2019亿', 'text-[#cc3529]'],
  ['中小', '5479.35', '-46.07', '-0.83%', '825.0亿', 'text-[#21812e]'],
]

function StatusBar() {
  return (
    <div className="flex h-7 items-center border-t-2 border-[#f6e2d6] bg-[#ece9d8] pl-px text-base whitespace-nowrap text-[#1c1c1c]">
      {MARKETS.map(([name, value, change, pct, amount, color]) => (
        <div key={name} className="flex w-[287px] shrink-0 items-center">
          <span>{name}</span>
          <span className={clsx('flex flex-1 justify-between pr-3 text-[17px] font-bold', color)}>
            <span>{value}</span><span>{change}</span><span>{pct}</span>
          </span>
          <span className="w-[60px] text-[15px]">{amount}</span>
        </div>
      ))}
      <svg width={144} height={22} viewBox="0 0 144 22" shapeRendering="crispEdges" aria-hidden="true">
        <path d="M3.500 0V22M142.500 0V22" stroke="#b5b2a2" />
        <path d="M8 9H72" stroke="#c03a30" strokeWidth={2} strokeDasharray="9 1" />
        <path d="M8 14H72" stroke="#c03a30" strokeWidth={4} strokeDasharray="5 2" />
        <path d="M37 7V4M47 7V4" stroke="#c03a30" strokeWidth={4} />
        <path d="M77 9H140" stroke="#3a8c40" strokeWidth={2} strokeDasharray="9 1" />
        <path d="M77 14H140" stroke="#3a8c40" strokeWidth={4} strokeDasharray="5 2" />
        <path d="M97 7V4M104 7V3" stroke="#3a8c40" strokeWidth={4} />
      </svg>
      <span className="ml-1">信达证券北京云行情</span>
      <svg width={84} height={24} viewBox="0 0 84 24" className="mr-1 ml-auto" aria-hidden="true">
        <rect x="2" y="4" width="15" height="15" rx="4" fill="#e6d030" stroke="#a8941c" />
        <path d="M9.500 15V8m-4 3l4-4l4 4" stroke="#8c7a18" strokeWidth={2} fill="none" />
        <path d="M33 8v6M33 11l-4 9h8zM29 4q-3 4 0 8M37 4q3 4 0 8M26 2q-4 6 0 11M40 2q4 6 0 11" stroke="#8c8a7c" fill="none" />
        <path d="M56 3l6 5H50zM56 8l6 5H50zM56 13l6 5H50zM54 17h4v3h-4z" fill="#8c8a7c" />
        <path d="M74 5v8M74 16v3" stroke="#8c8a7c" strokeWidth={2} />
      </svg>
    </div>
  )
}

function BrowserIcon() {
  return (
    <svg width={22} height={24} viewBox="0 0 22 24" fill="none" className="shrink-0" aria-hidden="true">
      <path d="M18 16Q15 21 10 20Q5 18 5 13Q6 6 12 6Q18 7 18 13H8" stroke="#6cc0f0" strokeWidth={3.500} />
      <path d="M3 22Q-1 17 8 8Q17 0 20 3Q21 5 19 7" stroke="#e8c850" strokeWidth={2} />
    </svg>
  )
}

function Taskbar() {
  return (
    <footer className="flex h-10 items-center bg-linear-to-b from-[#4a80d4] via-[#3160bc] to-[#2a52a4] text-white">
      <button className="flex h-full w-[129px] shrink-0 items-center gap-2 rounded-r-2xl bg-linear-to-b from-[#62b060] via-[#3a9440] to-[#2c7a32] pl-3.5">
        <svg width={26} height={26} viewBox="0 0 26 26" aria-hidden="true">
          <path d="M3 4q5-3 9 0l-2 9q-4-2-9 0z" fill="#e0633a" />
          <path d="M14 5q5 2 11-1l-2 9q-5 2-11 0z" fill="#7cc04c" />
          <path d="M1 15q5-2 9 0l-2 9q-4-3-9 0z" fill="#4c8ce0" />
          <path d="M12 15q5 2 11 0l-2 9q-5 2-11 0z" fill="#ecc840" />
        </svg>
        <span className="text-2xl leading-none italic">开始</span>
      </button>
      <div className="ml-3 flex min-w-0 flex-1 gap-0.5">
        {['信达...', '博文_...', '我的...', '[转载...', '强势...', '【指...', '【通...', 'Corel...'].map((t, i) => (
          <button
            key={t}
            className={clsx(
              "flex h-8 min-w-0 flex-1 items-center gap-1 overflow-hidden rounded-sm font-['Liberation_Mono','Noto_Sans_CJK_SC',monospace] text-[15px] whitespace-nowrap",
              i === 0 ? 'bg-[#2a4a98] pl-3.5' : 'bg-linear-to-b from-[#5c8ed8] to-[#4576c4]',
              i > 0 && (i === 7 ? 'pl-2' : 'pl-3'),
            )}
          >
            {i === 0 && <AppLogo className="mr-1 h-4 w-5" />}
            {i > 0 && i < 7 && <BrowserIcon />}
            {i === 7 && (
              <svg width={20} height={20} viewBox="0 0 20 20" aria-hidden="true">
                <path d="M2 6q8-8 16 0l-8 9z" fill="#d8583c" />
                <path d="M7 3l3 12l4-12z" fill="#ecc840" />
                <path d="M8 14h4v4H8z" fill="#3c3c50" />
              </svg>
            )}
            {t}
          </button>
        ))}
      </div>
      <svg width={20} height={20} viewBox="0 0 20 20" className="mr-3.5 ml-3.5 shrink-0" aria-hidden="true">
        <rect x="1" y="1" width="18" height="18" fill="#dde6f4" />
        <path d="M3 3h14M3 3v14" stroke="#3a5a98" strokeWidth={1.5} />
        <circle cx="11" cy="10" r="4" stroke="#3a5a98" strokeWidth={1.8} fill="none" />
        <path d="M12 12l4 4" stroke="#3a5a98" strokeWidth={1.8} />
      </svg>
      <div className="flex h-full w-[186px] shrink-0 items-center">
        <button aria-label="显示隐藏的图标" className="relative z-10 size-[23px] shrink-0 rounded-full bg-[#4f9ade]">
          <svg viewBox="0 0 24 24" fill="none" aria-hidden="true"><path d="M14 7l-5 5l5 5" stroke="#fff" strokeWidth={3} /></svg>
        </button>
        <div className="-ml-3 flex h-full flex-1 items-center bg-linear-to-b from-[#3ba0e8] via-[#2a8cd8] to-[#2378c4] pl-3.5 text-base">
          <svg width={98} height={24} viewBox="0 0 98 24" fill="none" aria-hidden="true">
            <path d="M2 6h11v9H2zM5 15h5v4H5z" fill="#b8d0e8" />
            <path d="M15 7q3 3 0 7M18 5q4 5 0 10M21 3q5 6 0 13" stroke="#6ce060" strokeWidth={1.5} />
            <path d="M27 5h10v8H27zM31 12h11v8H31z" fill="#34487c" stroke="#a8bcd8" />
            <path d="M37 13l8 9m0-9l-8 9" stroke="#d83a34" strokeWidth={2.500} />
            <path d="M52 12q0-8 9-8" stroke="#5cb84c" strokeWidth={5} />
            <path d="M60 5q10 6 2 14q-4 2-8-1" stroke="#d84a38" strokeWidth={5} />
            <path d="M58 8q5 4-2 9" stroke="#ecd050" strokeWidth={3} />
            <circle cx="80" cy="11" r="8" fill="#8c9298" stroke="#4c5258" />
            <circle cx="80" cy="11" r="3.500" fill="#34383c" stroke="#d8dce0" />
            <path d="M92 8q1 8-6 13" stroke="#a8bcd0" />
          </svg>
          <span className="ml-2 text-[17px] whitespace-nowrap">8:04</span>
        </div>
      </div>
    </footer>
  )
}

export default function App() {
  return (
    <div className="relative flex min-h-screen flex-col bg-[#141517] font-['Liberation_Sans','Noto_Sans_CJK_SC',sans-serif]">
      <MenuBar />
      <main className="relative flex flex-1">
        <div className="relative min-w-0 flex-1">
          <PricePanel />
          <StrengthPanel />
          <VolumePanel />
          <TemplateTabs />
          <div className="absolute top-[446px] left-[342px] h-[67px] w-[682px] bg-black" />
        </div>
        <QuotePanel />
        <SideToolbar />
        <DrawWindow />
        <ImeBar />
      </main>
      <StatusBar />
      <Taskbar />
      <Banner />
    </div>
  )
}
